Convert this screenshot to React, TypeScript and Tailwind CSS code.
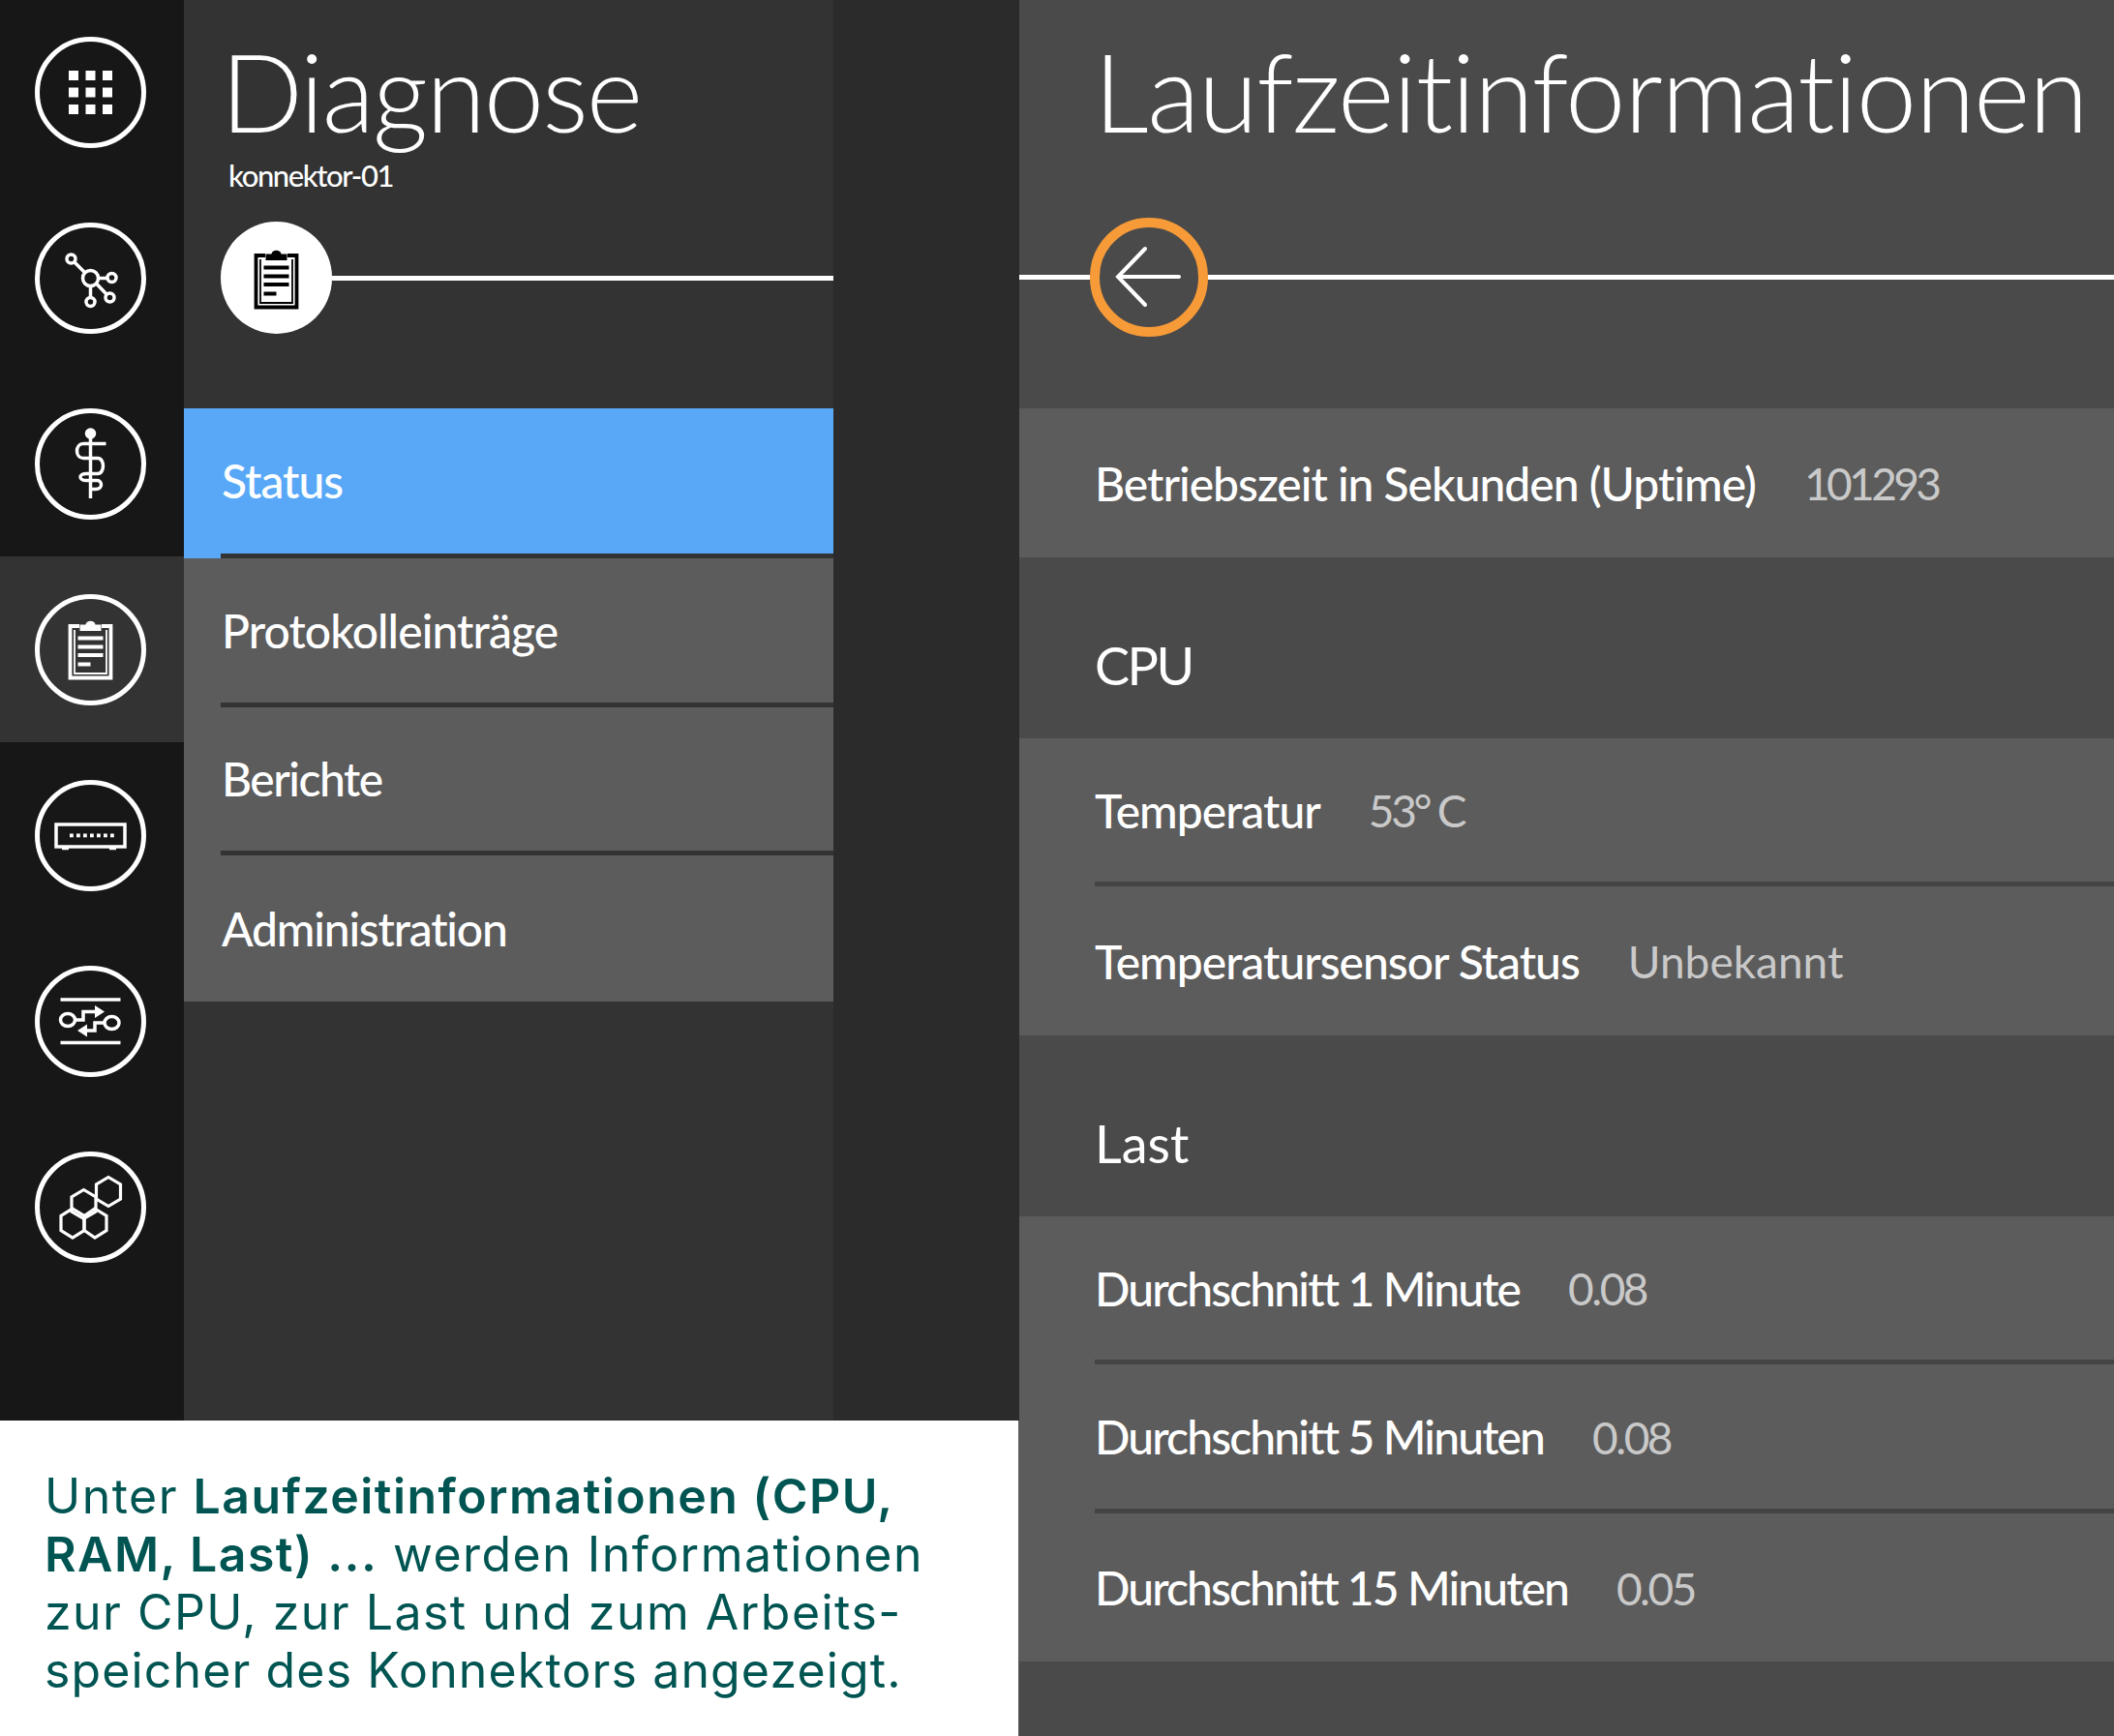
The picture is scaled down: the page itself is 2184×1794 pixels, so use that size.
import React from "react";

const railIcons: { key: string; active?: boolean; art: React.ReactNode }[] = [
    {
        key: "apps",
        art: (
            <g fill="currentColor" stroke="none">
                {[35, 52.5, 70].map((y) =>
                    [35, 52.5, 70].map((x) => <rect key={`${x}-${y}`} x={x} y={y} width="10" height="10"/>)
                )}
            </g>
        ),
    },
    {
        key: "network",
        art: (
            <g>
                <circle cx="57.5" cy="57.5" r="8"/>
                <circle cx="37.5" cy="37.5" r="4.5"/>
                <circle cx="79.5" cy="57" r="4.5"/>
                <circle cx="77.5" cy="77.5" r="4.5"/>
                <circle cx="57.5" cy="82" r="4.5"/>
                <path d="M41 41 51.5 51.5M65.5 57.5H75M63.5 63 74 74M57.5 65.5V77.5"/>
            </g>
        ),
    },
    {
        key: "diagnose",
        art: (
            <g>
                <circle cx="57.5" cy="26" r="4" fill="currentColor"/>
                <path d="M57.5 28V93"/>
                <path
                    d="M73.5 36.5H50C46 36.5 43.5 40 43.5 44C43.5 48 46 51.5 50 51.5H65C68.5 51.5 70.5 55.5 70.5 59.5C70.5 63.5 68.5 67.5 65 67.5H53C49.5 67.5 47 69 47 71C47 73 49.5 74.5 53 74.5H64.5C67 74.5 68.5 76.5 68.5 79C68.5 81.5 66.5 83.5 63 83.5H56"/>
            </g>
        ),
    },
    {
        key: "status",
        active: true,
        art: <ClipboardArt/>,
    },
    {
        key: "router",
        art: (
            <g>
                <rect x="22" y="46" width="71" height="23"/>
                <path d="M28 70.5H35M77 70.5H84"/>
                <g fill="currentColor" stroke="none">
                    {[36, 43, 50, 57, 64, 71, 78].map((x) => <rect key={x} x={x} y="55.5" width="3.8" height="3.8"/>)}
                </g>
            </g>
        ),
    },
    {
        key: "transfer",
        art: (
            <g>
                <path d="M26.5 35H88.5M26.5 79.5H88.5"/>
                <ellipse cx="34" cy="56" rx="7.5" ry="6.5"/>
                <ellipse cx="79.5" cy="59" rx="7.5" ry="6.5"/>
                <path d="M41.5 56H50V47.5H69M72 59H62V67H47"/>
                <path d="M62 41 72 47.5 62 54ZM54 60.5 44 67 54 73.5Z" fill="currentColor" stroke="none"/>
            </g>
        ),
    },
    {
        key: "modules",
        art: (
            <g strokeWidth="3.2">
                <polygon points="76,26.5 88.5,34 88.5,49 76,56.5 63.5,49 63.5,34"/>
                <polygon points="50.5,39.5 63,47 63,62 50.5,69.5 38,62 38,47"/>
                <polygon points="39,59 51,66.5 51,81.5 39,89 27,81.5 27,66.5"/>
                <polygon points="62,59 74,66.5 74,81.5 62,89 51,81.5 51,66.5"/>
            </g>
        ),
    },
];

function ClipboardArt() {
    return (
        <g>
            <path d="M46 33H36.5V86.5H78.5V33H69" strokeWidth="3.8"/>
            <path d="M41 37V82H74V37" strokeWidth="1.8"/>
            <path d="M46.5 38V31.5H52.5C53 26.5 62 26.5 62.5 31.5H68.5V38Z" fill="currentColor" stroke="none"/>
            <path d="M44.5 45.5H70.5M44.5 54.5H70.5M44.5 63H70.5M44.5 72.5H57.5" strokeWidth="3.8"/>
        </g>
    );
}

const menuItems = [
    {label: "Status", bg: "bg-[#59a8f8]", height: "h-[155px]", tracking: "tracking-[-1px]"},
    {label: "Protokolleinträge", bg: "bg-[#5c5c5c]", height: "h-[154px]", tracking: "tracking-[-0.9px]"},
    {label: "Berichte", bg: "bg-[#5c5c5c]", height: "h-[153px]", tracking: "tracking-[-1.5px]"},
    {label: "Administration", bg: "bg-[#5c5c5c]", height: "h-[151px]", tracking: "tracking-[-1.2px]", last: true},
];

type RowProps = {
    label: string;
    value: string;
    divider?: boolean;
    labelTracking?: string;
    valueTracking: string;
};

const Row = ({label, value, divider, labelTracking = "tracking-[-1px]", valueTracking}: RowProps) => (
    <div className="flex h-[153.5px] flex-col">
        <div className="flex flex-1 items-center gap-[50px] pt-[2px] pl-[78px]">
            <span className={`text-[48px] font-medium text-white ${labelTracking}`}>{label}</span>
            <span className={`text-[46px] text-[#c9c9c9] ${valueTracking}`}>{value}</span>
        </div>
        {divider && <div className="ml-[78px] h-[5px] bg-[#444444]"/>}
    </div>
);

const Heading = ({label, tracking}: { label: string; tracking: string }) => (
    <div className={`flex h-[187px] items-center pt-[36px] pl-[78px] text-[54px] text-white ${tracking}`}>
        {label}
    </div>
);

export default function App() {
    return (
        <div className="flex h-[1794px] w-[2184px] overflow-hidden font-['Lato',sans-serif]">
            <div className="flex w-[1053px] flex-col bg-[#5c5c5c]">
                <div className="flex h-[1468px]">
                    <nav className="w-[190px] bg-[#171717]">
                        <div className="-mt-px">
                            {railIcons.map((icon) => (
                                <div key={icon.key}
                                     className={`flex h-[192px] items-center justify-center pr-[3px] ${icon.active ? "bg-[#333333]" : ""}`}>
                                    <svg viewBox="0 0 115 115" className="h-[115px] w-[115px] text-white" fill="none"
                                         stroke="currentColor" strokeWidth="3.5">
                                        <circle cx="57.5" cy="57.5" r="55" strokeWidth="5"/>
                                        {icon.art}
                                    </svg>
                                </div>
                            ))}
                        </div>
                    </nav>
                    <section className="w-[671px] bg-[#333333]">
                        <div className="h-[422px] pt-[26px]">
                            <h1 className="pl-[38px] text-[112px] leading-[136px] font-light tracking-[-2px] text-white">Diagnose</h1>
                            <p className="pl-[46px] text-[31px] leading-[38px] font-medium tracking-[-1.4px] text-white">konnektor-01</p>
                            <div className="mt-[29px] flex items-center pl-[38px]">
                                <div className="flex h-[116px] w-[115px] shrink-0 items-center justify-center rounded-full bg-white">
                                    <svg viewBox="27 20 61 72" className="h-[72px] w-[61px] text-black" fill="none"
                                         stroke="currentColor" strokeWidth="3">
                                        <ClipboardArt/>
                                    </svg>
                                </div>
                                <div className="h-[5px] flex-1 bg-white"/>
                            </div>
                        </div>
                        {menuItems.map((item) => (
                            <div key={item.label} className={`flex flex-col ${item.height} ${item.bg}`}>
                                <div className={`flex flex-1 items-center pl-[39px] text-[48px] font-medium text-white ${item.tracking}`}>
                                    {item.label}
                                </div>
                                {!item.last && <div className="ml-[38px] h-[5px] bg-[#333333]"/>}
                            </div>
                        ))}
                    </section>
                    <div className="w-[192px] bg-[#2b2b2b]"/>
                </div>
                <div className="mr-px flex-1 bg-white pt-[48px] pl-[46px] text-[50px] leading-[60px] tracking-[1.47px] text-[#005552] font-['Inter',sans-serif]">
                    <p>Unter <b className="font-semibold">Laufzeitinformationen (CPU,</b></p>
                    <p><b className="font-semibold">RAM, Last) ...</b> werden Informationen</p>
                    <p>zur CPU, zur Last und zum Arbeits-</p>
                    <p className="tracking-[1.13px]">speicher des Konnektors angezeigt.</p>
                </div>
            </div>
            <main className="flex-1 bg-[#4a4a4a]">
                <div className="h-[422px] pt-[26px]">
                    <h1 className="pl-[77px] text-[112px] leading-[136px] font-light tracking-[-1.4px] whitespace-nowrap text-white">Laufzeitinformationen</h1>
                    <div className="relative mt-[63px] flex h-[122px] items-center">
                        <div className="h-[5px] w-full bg-white"/>
                        <div className="absolute left-[73px] flex h-[123px] w-[122px] items-center justify-center rounded-full border-[10px] border-[#f79a38] bg-[#4a4a4a]">
                            <svg viewBox="0 0 70 64" className="h-[64px] w-[70px] text-white" fill="none"
                                 stroke="currentColor" strokeWidth="4" strokeLinecap="round">
                                <path d="M3 32H66M31 3 3 32 31 61"/>
                            </svg>
                        </div>
                    </div>
                </div>
                <div className="bg-[#5c5c5c]">
                    <Row label="Betriebszeit in Sekunden (Uptime)" value="101293" valueTracking="tracking-[-3.6px]"/>
                </div>
                <Heading label="CPU" tracking="tracking-[-2.5px]"/>
                <div className="bg-[#5c5c5c]">
                    <Row label="Temperatur" value="53° C" divider valueTracking="tracking-[-3.3px]"/>
                    <Row label="Temperatursensor Status" value="Unbekannt" valueTracking="tracking-[0px]"/>
                </div>
                <Heading label="Last" tracking="tracking-[0px]"/>
                <div className="bg-[#5c5c5c]">
                    <Row label="Durchschnitt 1 Minute" value="0.08" divider labelTracking="tracking-[-1.85px]" valueTracking="tracking-[-2.5px]"/>
                    <Row label="Durchschnitt 5 Minuten" value="0.08" divider labelTracking="tracking-[-1.85px]" valueTracking="tracking-[-2.5px]"/>
                    <Row label="Durchschnitt 15 Minuten" value="0.05" labelTracking="tracking-[-1.9px]" valueTracking="tracking-[-2.5px]"/>
                </div>
            </main>
        </div>
    );
}
